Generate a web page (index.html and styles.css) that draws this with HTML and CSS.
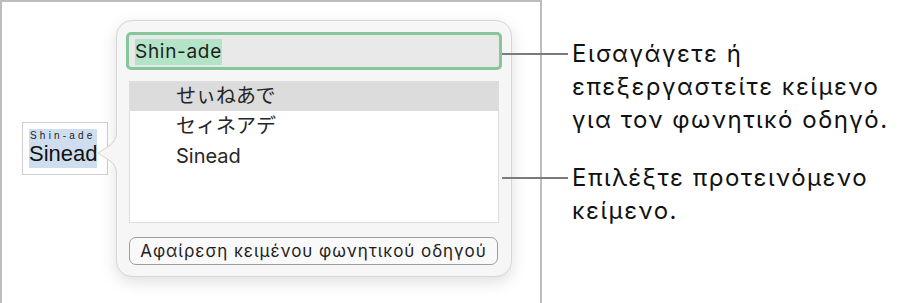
FILE: index.html
```html
<!DOCTYPE html>
<html>
<head>
    <title>Phonetic guide</title>
    <link rel="stylesheet" href="styles.css">
</head>
<body>
    <div class="frame">
        <div class="ruby-box">
            <div class="ruby-sel">
                <div class="ruby-top">Shin-ade</div>
                <div class="ruby-base">Sinead</div>
            </div>
        </div>

        <div class="popover">
            <svg class="arrow" width="20" height="40" viewBox="0 0 20 40">
                <path d="M20 0 L19.5 0 Q19.5 8 12 13 L1 20 L12 27 Q19.5 32 19.5 40 L20 40 Z" fill="#f6f6f6"/>
                <path d="M19.5 0 Q19.5 8 12 13 L1 20 L12 27 Q19.5 32 19.5 40" fill="none" stroke="#d2d2d2" stroke-width="1"/>
            </svg>
            <div class="field"><span class="field-sel">Shin-ade</span></div>
            <ul class="list">
                <li class="active">せぃねあで</li>
                <li>セィネアデ</li>
                <li>Sinead</li>
            </ul>
            <button class="remove">Αφαίρεση κειμένου φωνητικού οδηγού</button>
        </div>
    </div>

    <div class="notes">
        <p class="note note-one">Εισαγάγετε ή επεξεργαστείτε κείμενο για τον φωνητικό οδηγό.</p>
        <p class="note note-two">Επιλέξτε προτεινόμενο κείμενο.</p>
    </div>
</body>
</html>
```

FILE: styles.css
```css
body {
    margin: 0;
    width: 910px;
    height: 303px;
    overflow: hidden;
    display: flex;
    background: #fff;
    font-family: Inter, "Liberation Sans", Arial, "Noto Sans CJK JP", sans-serif;
    color: #1e1e1e;
}
.frame {
    width: 542px;
    height: 303px;
    border: 2px solid #bdbdbd;
    border-bottom: 0;
    display: flex;
    align-items: flex-start;
    padding: 18px 0 0 20px;
    box-sizing: border-box;
}
.ruby-box {
    width: 86px;
    height: 53px;
    margin-top: 102px;
    border: 1px solid #cfcfcf;
    box-sizing: border-box;
    padding: 6px;
    background: #fff;
    font-family: "Liberation Sans", Arial, sans-serif;
}
.ruby-sel {
    background: #cfdeef;
    width: 68px;
    height: 39px;
}
.ruby-top {
    font-size: 10px;
    letter-spacing: 3.2px;
    line-height: 13px;
    padding-left: 1px;
    color: #222;
}
.ruby-base {
    font-size: 22px;
    line-height: 24px;
    color: #111;
}
.popover {
    position: relative;
    margin-left: 8px;
    width: 396px;
    height: 257px;
    box-sizing: border-box;
    background: #f6f6f6;
    border: 1px solid #d6d6d6;
    border-radius: 16px;
    box-shadow: 0 5px 16px rgba(0, 0, 0, 0.13);
    padding: 11px 9px 0;
}
.arrow {
    position: absolute;
    left: -20px;
    top: 112px;
}
.field {
    height: 38px;
    box-sizing: border-box;
    border: 3px solid #86c69b;
    border-radius: 5px;
    background: #e9e9e9;
    padding: 4px 6px;
    font-size: 19px;
    line-height: 24px;
    letter-spacing: 0.7px;
}
.field-sel {
    background: #b3e4c7;
    display: inline-block;
    padding: 1px 0;
}
.list {
    list-style: none;
    margin: 11px 3px 0;
    padding: 0;
    height: 142px;
    box-sizing: border-box;
    background: #fff;
    border: 1px solid #dedede;
}
.list li {
    height: 30px;
    line-height: 30px;
    padding-left: 46px;
    font-size: 20px;
    color: #262626;
}
.list li.active {
    background: #dcdcdc;
    height: 29px;
    line-height: 29px;
}
.remove {
    display: block;
    margin: 14px 3px 0;
    width: 369px;
    height: 28px;
    border: 1px solid #9d9d9d;
    border-radius: 7px;
    background: #f9f9f9;
    font-family: inherit;
    font-size: 17px;
    letter-spacing: 0.95px;
    color: #1e1e1e;
    padding: 0;
}
.notes {
    padding-left: 30px;
}
.note {
    position: relative;
    margin: 0;
    font-size: 24px;
    line-height: 33px;
    letter-spacing: 1.5px;
    color: #111;
    width: 330px;
}
.note::before {
    content: "";
    position: absolute;
    left: -70px;
    top: 16px;
    width: 66px;
    height: 2px;
    background: #7b7b7b;
}
.note-one {
    margin-top: 37px;
}
.note-two {
    margin-top: 25px;
}
```
